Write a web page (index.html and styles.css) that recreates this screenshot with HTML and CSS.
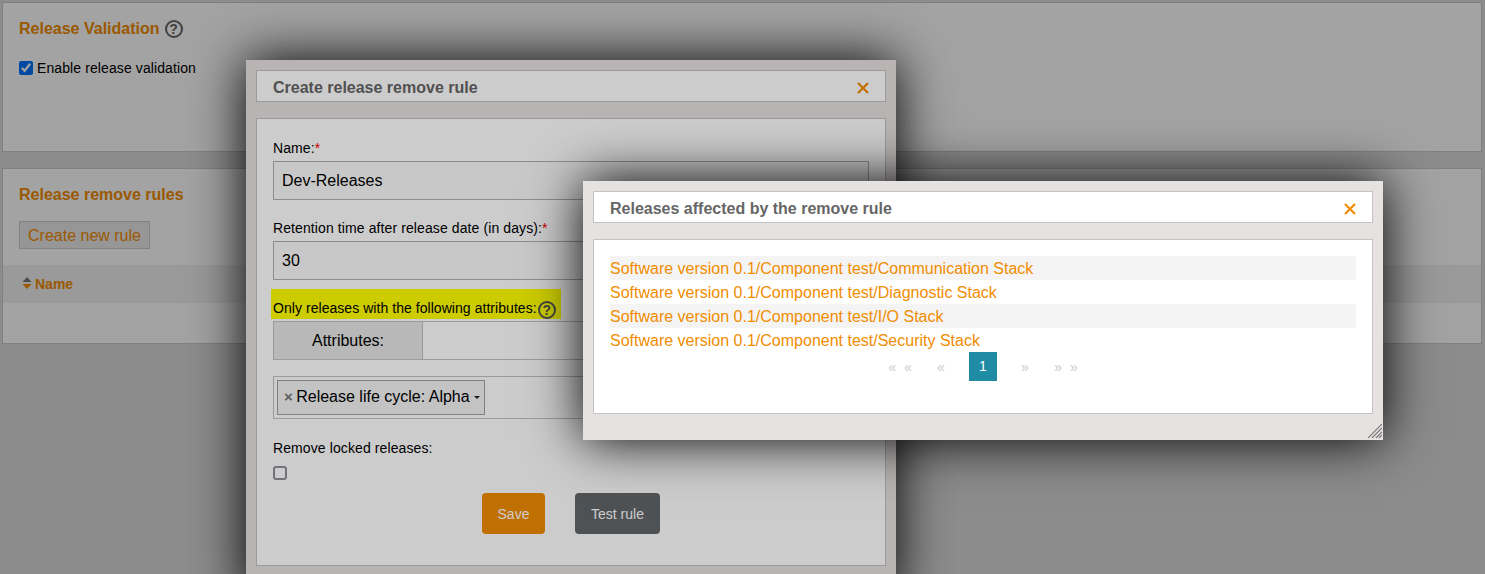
FILE: index.html
```html
<!DOCTYPE html>
<html lang="en">
<head>
  <meta charset="UTF-8">
  <meta name="viewport" content="width=device-width, initial-scale=1">
  <title>Release settings</title>
  <link rel="stylesheet" href="styles.css">
</head>
<body>

<div class="page">
  <section class="panel panel-validation">
    <h2 class="panel-title">Release Validation <span class="help">?</span></h2>
    <label class="check-line"><input type="checkbox" checked> Enable release validation</label>
  </section>

  <section class="panel panel-rules">
    <h2 class="panel-title">Release remove rules</h2>
    <button class="create-btn">Create new rule</button>
    <div class="table-head">
      <svg class="sort" width="10" height="12" viewBox="0 0 10 12">
        <path d="M5 0 L9.5 5 L0.5 5 Z" fill="#777"></path>
        <path d="M5 12 L9.5 7 L0.5 7 Z" fill="#f28c00"></path>
      </svg>
      <span>Name</span>
    </div>
  </section>
</div>

<div class="overlay"></div>

<div class="dialog dialog-rule">
  <div class="dialog-title">
    <span>Create release remove rule</span>
    <svg class="close" width="14" height="14" viewBox="0 0 14 14"><path d="M2 2 L12 12 M12 2 L2 12"></path></svg>
  </div>
  <div class="dialog-body rule-form">
    <label class="field-label">Name:<span class="req">*</span></label>
    <input class="text-input" type="text" value="Dev-Releases">
    <label class="field-label">Retention time after release date (in days):<span class="req">*</span></label>
    <input class="text-input" type="text" value="30">
    <div class="highlight">Only releases with the following attributes:<span class="help help-small">?</span></div>
    <div class="attr-row">
      <div class="attr-name">Attributes:</div>
      <div class="attr-value"></div>
    </div>
    <div class="tag-box">
      <div class="tag"><span class="tag-x">×</span> Release life cycle: Alpha <span class="caret"></span></div>
    </div>
    <label class="field-label locked-label">Remove locked releases:</label>
    <input class="locked-check" type="checkbox">
    <div class="actions">
      <button class="btn btn-save">Save</button>
      <button class="btn btn-test">Test rule</button>
    </div>
  </div>
</div>

<div class="overlay"></div>

<div class="dialog dialog-affected">
  <div class="dialog-title">
    <span>Releases affected by the remove rule</span>
    <svg class="close" width="14" height="14" viewBox="0 0 14 14"><path d="M2 2 L12 12 M12 2 L2 12"></path></svg>
  </div>
  <div class="dialog-body affected-body">
    <ul class="release-list">
      <li>Software version 0.1/Component test/Communication Stack</li>
      <li>Software version 0.1/Component test/Diagnostic Stack</li>
      <li>Software version 0.1/Component test/I/O Stack</li>
      <li>Software version 0.1/Component test/Security Stack</li>
    </ul>
    <div class="pager">
      <span class="pg pg-wide">« «</span>
      <span class="pg">«</span>
      <span class="pg-current">1</span>
      <span class="pg">»</span>
      <span class="pg pg-wide">» »</span>
    </div>
  </div>
  <svg class="grip" width="14" height="14" viewBox="0 0 14 14">
    <path d="M0 14 L14 0 M4 14 L14 4 M8 14 L14 8 M11 14 L14 11"></path>
  </svg>
</div>

</body>
</html>
```

FILE: styles.css
```css
* { box-sizing: border-box; }
html, body {
  margin: 0;
  height: 574px;
  overflow: hidden;
}
body {
  position: relative;
  background: #dcdcdc;
  font-family: "Liberation Sans", Arial, sans-serif;
  font-size: 14px;
  color: #000;
}

.page {
  padding: 2px 3px 0 2px;
}
.panel {
  background: #fff;
  border: 1px solid #c8c8c8;
  padding: 16px 16px 0;
}
.panel-validation {
  height: 150px;
  margin-bottom: 16px;
}
.panel-rules {
  height: 176px;
}
.panel-title {
  margin: 0;
  font-size: 16px;
  line-height: 20px;
  font-weight: bold;
  color: #f28c00;
  display: flex;
  align-items: center;
  gap: 5px;
}
.help {
  display: inline-block;
  width: 18px;
  height: 18px;
  border: 2px solid #666;
  border-radius: 50%;
  color: #666;
  font-size: 14px;
  line-height: 14px;
  font-weight: bold;
  text-align: center;
}
.help-small {
  color: #555;
  border-color: #555;
  letter-spacing: 0;
}
.check-line {
  display: flex;
  align-items: center;
  gap: 4px;
  margin-top: 21px;
  line-height: 16px;
  letter-spacing: 0.1px;
}
.check-line input {
  margin: 0;
  width: 14px;
  height: 14px;
}
.create-btn {
  display: block;
  margin-top: 16px;
  width: 131px;
  height: 28px;
  padding: 1px 0 0;
  background: #ececec;
  border: 1px solid #ccc;
  color: #f28c00;
  font-family: inherit;
  font-size: 16px;
}
.table-head {
  margin: 16px -16px 0;
  height: 38px;
  background: #f2f2f2;
  display: flex;
  align-items: center;
  gap: 3px;
  padding-left: 19px;
  font-weight: bold;
  color: #f28c00;
}
.sort { margin-top: -3px; }

.overlay {
  position: absolute;
  top: 0;
  left: 0;
  width: 100%;
  height: 100%;
  background: rgba(0, 0, 0, 0.2);
}

.dialog {
  position: absolute;
  background: #e6e2e1;
  padding: 10px;
  box-shadow: 0 0 50px #000;
}
.dialog-rule {
  left: 246px;
  top: 60px;
  width: 650px;
  height: 540px;
}
.dialog-affected {
  left: 583px;
  top: 181px;
  width: 800px;
  height: 259px;
}
.dialog-title {
  height: 32px;
  background: #fff;
  border: 1px solid #c4c2c2;
  padding: 4px 15px 0 16px;
  display: flex;
  align-items: center;
  justify-content: space-between;
  font-size: 16px;
  font-weight: bold;
  color: #666;
}
.close path {
  stroke: #f28c00;
  stroke-width: 2.2;
  fill: none;
}
.dialog-body {
  margin-top: 16px;
  background: #fff;
  border: 1px solid #c4c2c2;
}

.rule-form {
  height: 448px;
  padding: 21px 16px 0;
}
.field-label {
  display: block;
  line-height: 16px;
  letter-spacing: 0.1px;
}
.req { color: #f00; }
.text-input {
  display: block;
  width: 596px;
  height: 39px;
  margin: 5px 0 20px;
  padding: 0 8px;
  border: 1px solid #b0b0b0;
  background: #fbfbfb;
  font-family: inherit;
  font-size: 16px;
  color: #000;
}
.highlight {
  width: 290px;
  height: 30px;
  margin: -11px 0 2px -2px;
  padding: 11px 0 0 2px;
  background: #ff0;
  line-height: 16px;
  white-space: nowrap;
  letter-spacing: 0.05px;
}
.highlight .help-small {
  margin-left: 1px;
  vertical-align: -2px;
}
.attr-row {
  display: flex;
  height: 39px;
  width: 596px;
  border: 1px solid #c4c2c2;
  font-size: 16px;
}
.attr-name {
  width: 149px;
  background: #e6e6e6;
  border-right: 1px solid #c4c2c2;
  text-align: center;
  line-height: 37px;
}
.attr-value { flex: 1; background: #fff; }
.tag-box {
  width: 596px;
  height: 43px;
  margin-top: 16px;
  padding: 3px;
  border: 1px solid #c4c2c2;
}
.tag {
  width: 208px;
  height: 35px;
  padding-left: 6px;
  border: 1px solid #a0a0a0;
  background: #f4f4f4;
  font-size: 16px;
  line-height: 31px;
  white-space: nowrap;
}
.tag-x {
  color: #777;
  font-weight: bold;
  font-size: 15px;
  margin-right: -1px;
}
.caret {
  display: inline-block;
  border-top: 3px solid #222;
  border-left: 3px solid transparent;
  border-right: 3px solid transparent;
  vertical-align: 3px;
}
.locked-label { margin-top: 21px; }
.locked-check {
  appearance: none;
  display: block;
  margin: 10px 0 0;
  width: 14px;
  height: 14px;
  border: 2px solid #8f8f9d;
  border-radius: 3px;
  background: #fff;
}
.actions {
  display: flex;
  gap: 30px;
  margin: 13px 0 0 209px;
}
.btn {
  height: 41px;
  border: none;
  border-radius: 4px;
  color: #fff;
  font-family: inherit;
  font-size: 14px;
  padding: 0;
}
.btn-save { width: 63px; background: #f08c00; }
.btn-test { width: 85px; background: #63676b; }

.affected-body {
  height: 175px;
  padding: 16px 16px 0;
}
.release-list {
  list-style: none;
  margin: 0;
  padding: 0;
  font-size: 16px;
  line-height: 25px;
  color: #f28c00;
}
.release-list li { height: 24px; }
.release-list li:nth-child(odd) { background: #f4f4f4; }
.pager {
  display: flex;
  justify-content: center;
  align-items: center;
  height: 29px;
  font-size: 14px;
  color: #c8c8c8;
}
.pg {
  width: 56px;
  text-align: center;
}
.pg-wide {
  width: 26px;
  word-spacing: 4px;
  white-space: nowrap;
}
.pg-current {
  width: 28px;
  height: 29px;
  background: #1f8ba5;
  color: #fff;
  text-align: center;
  line-height: 29px;
}

.grip {
  position: absolute;
  right: 1px;
  bottom: 2px;
}
.grip path {
  stroke: #777;
  stroke-width: 1.2;
  fill: none;
}
```
